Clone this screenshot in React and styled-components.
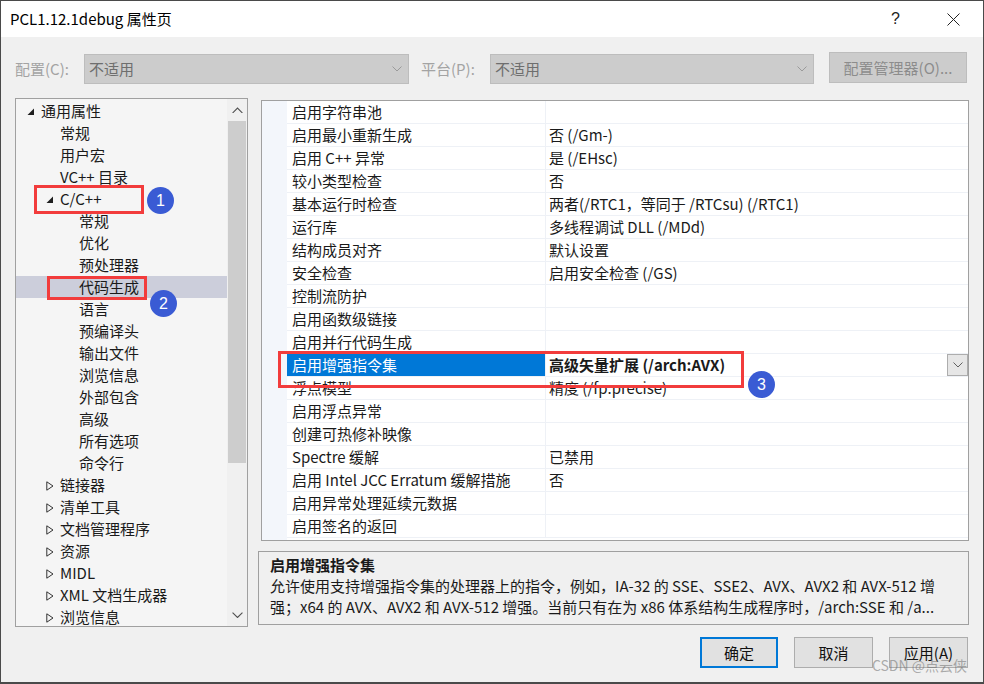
import styled, { createGlobalStyle } from 'styled-components';

const GlobalStyle = createGlobalStyle`
  html, body {
    margin: 0;
    padding: 0;
    background: #f0f0f0;
  }
  * {
    box-sizing: border-box;
  }
`;

const FONT = `"Noto Sans CJK SC", "Noto Sans", sans-serif`;

const treeItems = [
  { label: '通用属性', level: 0, toggle: 'open' },
  { label: '常规', level: 1 },
  { label: '用户宏', level: 1 },
  { label: 'VC++ 目录', level: 1 },
  { label: 'C/C++', level: 1, toggle: 'open' },
  { label: '常规', level: 2 },
  { label: '优化', level: 2 },
  { label: '预处理器', level: 2 },
  { label: '代码生成', level: 2, selected: true },
  { label: '语言', level: 2 },
  { label: '预编译头', level: 2 },
  { label: '输出文件', level: 2 },
  { label: '浏览信息', level: 2 },
  { label: '外部包含', level: 2 },
  { label: '高级', level: 2 },
  { label: '所有选项', level: 2 },
  { label: '命令行', level: 2 },
  { label: '链接器', level: 1, toggle: 'closed' },
  { label: '清单工具', level: 1, toggle: 'closed' },
  { label: '文档管理程序', level: 1, toggle: 'closed' },
  { label: '资源', level: 1, toggle: 'closed' },
  { label: 'MIDL', level: 1, toggle: 'closed' },
  { label: 'XML 文档生成器', level: 1, toggle: 'closed' },
  { label: '浏览信息', level: 1, toggle: 'closed' },
];

const props = [
  ['启用字符串池', ''],
  ['启用最小重新生成', '否 (/Gm-)'],
  ['启用 C++ 异常', '是 (/EHsc)'],
  ['较小类型检查', '否'],
  ['基本运行时检查', '两者(/RTC1，等同于 /RTCsu) (/RTC1)'],
  ['运行库', '多线程调试 DLL (/MDd)'],
  ['结构成员对齐', '默认设置'],
  ['安全检查', '启用安全检查 (/GS)'],
  ['控制流防护', ''],
  ['启用函数级链接', ''],
  ['启用并行代码生成', ''],
  ['启用增强指令集', '高级矢量扩展 (/arch:AVX)', true],
  ['浮点模型', '精度 (/fp:precise)'],
  ['启用浮点异常', ''],
  ['创建可热修补映像', ''],
  ['Spectre 缓解', '已禁用'],
  ['启用 Intel JCC Erratum 缓解措施', '否'],
  ['启用异常处理延续元数据', ''],
  ['启用签名的返回', ''],
];

const Chevron = ({ up, color = '#8a8a8a', size = 10 }) => (
  <svg width={size} height={size * 0.6} viewBox="0 0 10 6">
    <polyline
      points={up ? '0.5,5.5 5,1 9.5,5.5' : '0.5,0.5 5,5 9.5,0.5'}
      fill="none"
      stroke={color}
      strokeWidth="1"
    />
  </svg>
);

const Toggle = ({ kind }) => {
  if (kind === 'open') {
    return (
      <svg width="8" height="8" viewBox="0 0 8 8">
        <polygon points="7,0.5 7,7 0.5,7" fill="#1e1e1e" />
      </svg>
    );
  }
  if (kind === 'closed') {
    return (
      <svg width="8" height="10" viewBox="0 0 8 10">
        <polygon points="0.8,0.8 7,5 0.8,9.2" fill="none" stroke="#333" strokeWidth="1" />
      </svg>
    );
  }
  return null;
};

const App = () => {
  return (
    <Window>
      <GlobalStyle />
      <TitleBar>
        <Title>PCL1.12.1debug 属性页</Title>
        <TitleButtons>
          <HelpGlyph>?</HelpGlyph>
          <svg width="13" height="13" viewBox="0 0 13 13">
            <line x1="0.5" y1="0.5" x2="12.5" y2="12.5" stroke="#222" strokeWidth="1" />
            <line x1="12.5" y1="0.5" x2="0.5" y2="12.5" stroke="#222" strokeWidth="1" />
          </svg>
        </TitleButtons>
      </TitleBar>

      <Body>
        <Toolbar>
          <DimLabel>配置(C):</DimLabel>
          <Combo>
            <span>不适用</span>
            <Chevron color="#9a9a9a" />
          </Combo>
          <DimLabel $indent>平台(P):</DimLabel>
          <Combo>
            <span>不适用</span>
            <Chevron color="#9a9a9a" />
          </Combo>
          <span />
          <DimButton>配置管理器(O)...</DimButton>
        </Toolbar>

        <Main>
          <Tree>
            <TreeList>
              {treeItems.map((item, i) => (
                <TreeRow key={i} $level={item.level} $selected={item.selected}>
                  <ToggleSlot>
                    <Toggle kind={item.toggle} />
                  </ToggleSlot>
                  {item.label}
                </TreeRow>
              ))}
            </TreeList>
            <ScrollBar>
              <ScrollArrow>
                <Chevron up color="#505050" size={11} />
              </ScrollArrow>
              <Thumb />
              <ScrollTrack />
              <ScrollArrow>
                <Chevron color="#505050" size={11} />
              </ScrollArrow>
            </ScrollBar>
          </Tree>

          <RightColumn>
            <Grid>
              <Gutter />
              <Rows>
                {props.map(([name, value, selected], i) => (
                  <PropRow key={i}>
                    <NameCell $selected={selected}>{name}</NameCell>
                    <ValueCell $selected={selected}>
                      <span>{value}</span>
                      {selected && (
                        <DropButton>
                          <Chevron color="#606060" size={10} />
                        </DropButton>
                      )}
                    </ValueCell>
                  </PropRow>
                ))}
              </Rows>
            </Grid>

            <Description>
              <DescTitle>启用增强指令集</DescTitle>
              <DescLine>
                允许使用支持增强指令集的处理器上的指令，例如，IA-32 的 SSE、SSE2、AVX、AVX2 和 AVX-512 增
              </DescLine>
              <DescLine>
                强；x64 的 AVX、AVX2 和 AVX-512 增强。当前只有在为 x86 体系结构生成程序时，/arch:SSE 和 /a...
              </DescLine>
            </Description>

            <ButtonRow>
              <DialogButton $primary>确定</DialogButton>
              <DialogButton>取消</DialogButton>
              <DialogButton>应用(A)</DialogButton>
            </ButtonRow>
          </RightColumn>
        </Main>
      </Body>

      <Watermark>CSDN @点云侠</Watermark>

      <RedBox style={{ left: 33, top: 184, width: 110, height: 29 }} />
      <Badge style={{ left: 146, top: 186 }}>1</Badge>
      <RedBox style={{ left: 46, top: 275, width: 100, height: 24 }} />
      <Badge style={{ left: 149, top: 289 }}>2</Badge>
      <RedBox style={{ left: 277, top: 350, width: 466, height: 37 }} />
      <Badge style={{ left: 747, top: 370 }}>3</Badge>
    </Window>
  );
};

const Window = styled.div`
  position: relative;
  width: 984px;
  height: 684px;
  display: flex;
  flex-direction: column;
  border: 1px solid #4a4a4a;
  border-bottom-width: 2px;
  background: #f0f0f0;
  font-family: ${FONT};
  color: #1a1a1a;
  overflow: hidden;
`;

const TitleBar = styled.div`
  height: 36px;
  flex: none;
  background: #fff;
  display: flex;
  align-items: center;
  justify-content: space-between;
  padding: 0 23px 0 9px;
`;

const Title = styled.div`
  font-size: 15px;
  line-height: 20px;
  color: #000;
`;

const TitleButtons = styled.div`
  display: flex;
  align-items: center;
  gap: 47px;
`;

const HelpGlyph = styled.span`
  font-family: "Liberation Sans", sans-serif;
  font-size: 16px;
  color: #222;
`;

const Body = styled.div`
  flex: 1;
  display: flex;
  flex-direction: column;
  padding: 16px 0 0 14px;
`;

const Toolbar = styled.div`
  display: grid;
  grid-template-columns: 69px 325px 81px 324px 15px 138px;
  align-items: center;
  height: 31px;
`;

const DimLabel = styled.span`
  font-size: 15px;
  color: #a3a3a3;
  padding-left: ${(p) => (p.$indent ? '12px' : '0')};
  white-space: nowrap;
`;

const Combo = styled.div`
  height: 30px;
  background: #cccccc;
  border: 1px solid #bdbdbd;
  display: flex;
  align-items: center;
  justify-content: space-between;
  padding: 0 6px 0 4px;
  font-size: 15px;
  color: #6e6e6e;
`;

const DimButton = styled.div`
  height: 31px;
  margin-top: -2px;
  background: #cccccc;
  border: 1px solid #bdbdbd;
  display: flex;
  align-items: center;
  justify-content: center;
  font-size: 15px;
  color: #8c8c8c;
  white-space: nowrap;
`;

const Main = styled.div`
  display: flex;
  gap: 10px;
  margin-top: 14px;
`;

const Tree = styled.div`
  width: 233px;
  height: 529px;
  border: 1px solid #a0a0a0;
  background: #f5f5f5;
  display: flex;
  overflow: hidden;
`;

const TreeList = styled.div`
  flex: 1;
  padding-top: 1px;
  overflow: hidden;
`;

const TreeRow = styled.div`
  height: 22px;
  display: flex;
  align-items: center;
  padding-left: ${(p) => [11, 30, 49][p.$level]}px;
  font-size: 15px;
  line-height: 22px;
  color: #1a1a1a;
  white-space: nowrap;
  background: ${(p) => (p.$selected ? '#cccedb' : 'transparent')};
`;

const ToggleSlot = styled.span`
  width: 14px;
  flex: none;
  display: flex;
  align-items: center;
  padding-top: 2px;
`;

const ScrollBar = styled.div`
  width: 20px;
  flex: none;
  display: flex;
  flex-direction: column;
  background: #f0f0f0;
`;

const ScrollArrow = styled.div`
  height: 22px;
  display: flex;
  align-items: center;
  justify-content: center;
`;

const Thumb = styled.div`
  height: 342px;
  margin: 0 1px;
  background: #cdcdcd;
`;

const ScrollTrack = styled.div`
  flex: 1;
`;

const RightColumn = styled.div`
  width: 711px;
  display: flex;
  flex-direction: column;
`;

const Grid = styled.div`
  margin: 2px 0 0 3px;
  height: 441px;
  border: 1px solid #a0a0a0;
  background: #fff;
  display: flex;
  overflow: hidden;
`;

const Gutter = styled.div`
  width: 25px;
  flex: none;
  background: #f3f6fb;
`;

const Rows = styled.div`
  flex: 1;
  display: flex;
  flex-direction: column;
`;

const PropRow = styled.div`
  height: 23px;
  display: grid;
  grid-template-columns: 259px 1fr;
  border-bottom: 1px solid #eef1f6;
  font-size: 15px;
  line-height: 22px;
`;

const NameCell = styled.div`
  padding-left: 5px;
  white-space: nowrap;
  border-right: 1px solid #eef1f6;
  background: ${(p) => (p.$selected ? '#0078d7' : 'transparent')};
  color: ${(p) => (p.$selected ? '#fff' : '#1a1a1a')};
`;

const ValueCell = styled.div`
  display: flex;
  align-items: center;
  justify-content: space-between;
  padding-left: 3px;
  white-space: nowrap;
  font-weight: ${(p) => (p.$selected ? 700 : 400)};
  color: #1a1a1a;
`;

const DropButton = styled.div`
  width: 21px;
  height: 22px;
  margin-top: -1px;
  background: #e6e6e6;
  border: 1px solid #adadad;
  display: flex;
  align-items: center;
  justify-content: center;
`;

const Description = styled.div`
  margin-top: 10px;
  height: 74px;
  border: 1px solid #a0a0a0;
  padding: 2px 11px 0 11px;
  font-size: 15px;
  line-height: 21px;
`;

const DescTitle = styled.div`
  font-weight: 700;
  color: #1a1a1a;
`;

const DescLine = styled.div`
  white-space: nowrap;
  overflow: hidden;
  color: #1a1a1a;
`;

const ButtonRow = styled.div`
  display: flex;
  justify-content: flex-end;
  gap: 16px;
  margin-top: 12px;
  padding-right: 1px;
`;

const DialogButton = styled.div`
  width: ${(p) => (p.$primary ? '78px' : '79px')};
  height: 31px;
  background: #e1e1e1;
  border: ${(p) => (p.$primary ? '2px solid #0078d7' : '1px solid #adadad')};
  display: flex;
  align-items: center;
  justify-content: center;
  font-size: 15px;
  color: #111;
`;

const Watermark = styled.div`
  position: absolute;
  right: 16px;
  bottom: 7px;
  font-size: 14px;
  color: rgba(110, 110, 110, 0.55);
  white-space: nowrap;
`;

const RedBox = styled.div`
  position: absolute;
  border: 3px solid #f23c3c;
  pointer-events: none;
`;

const Badge = styled.div`
  position: absolute;
  width: 27px;
  height: 27px;
  border-radius: 50%;
  background: #3a5bd4;
  color: #fff;
  font-family: "Liberation Sans", sans-serif;
  font-size: 16px;
  display: flex;
  align-items: center;
  justify-content: center;
`;

export default App;
